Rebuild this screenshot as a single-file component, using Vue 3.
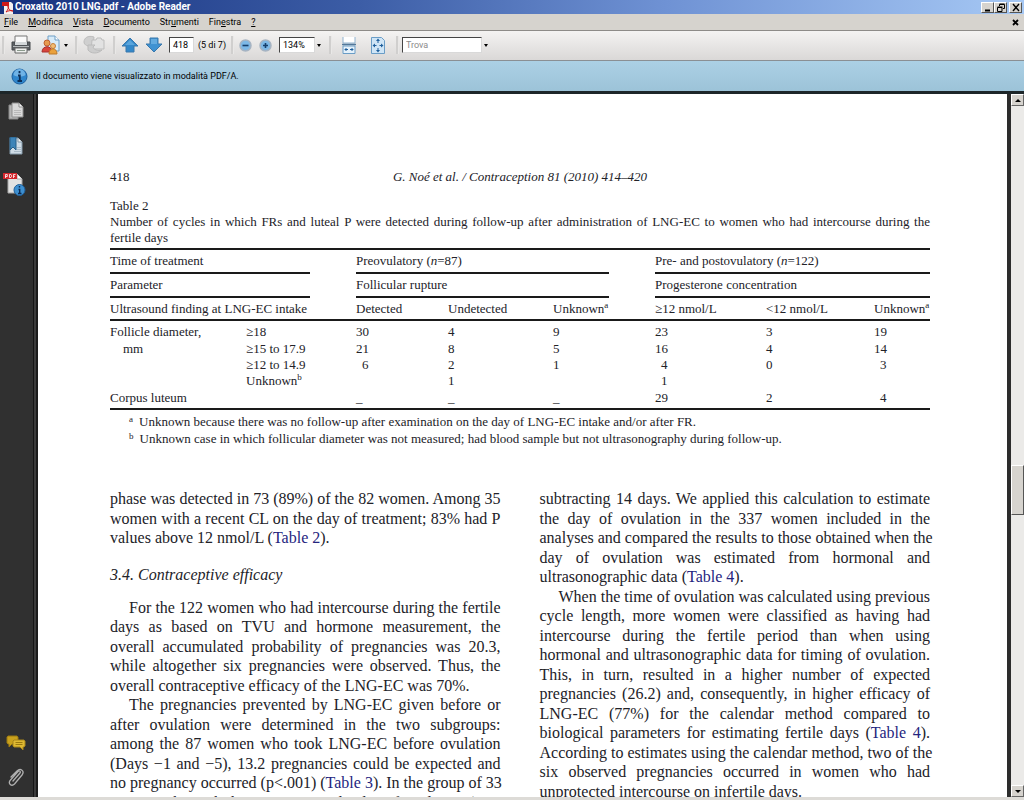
<script setup>
const menus = [
  ['', 'F', 'ile'], ['', 'M', 'odifica'], ['', 'V', 'ista'], ['', 'D', 'ocumento'],
  ['Str', 'u', 'menti'], ['Fin', 'e', 'stra'], ['', '?', ''],
]

const rows = [
  { label: 'Follicle diameter,', sub: '≥18', v: ['30', '4', '9', '23', '3', '19'] },
  { label: 'mm', indent: true, sub: '≥15 to 17.9', v: ['21', '8', '5', '16', '4', '14'] },
  { label: '', sub: '≥12 to 14.9', v: ['6', '2', '1', '4', '0', '3'], pad: [0, 3, 5] },
  { label: '', sub: 'Unknown', mark: 'b', v: ['', '1', '', '1', '', ''], pad: [3] },
  { label: 'Corpus luteum', sub: '', v: ['_', '_', '_', '29', '2', '4'], pad: [5] },
]

const left = [
  { lines: [
    'phase was detected in 73 (89%) of the 82 women. Among 35',
    'women with a recent CL on the day of treatment; 83% had P',
    'values above 12 nmol/L ([Table 2]).',
  ] },
  { heading: '3.4. Contraceptive efficacy' },
  { indent: true, lines: [
    'For the 122 women who had intercourse during the fertile',
    'days as based on TVU and hormone measurement, the',
    'overall accumulated probability of pregnancies was 20.3,',
    'while altogether six pregnancies were observed. Thus, the',
    'overall contraceptive efficacy of the LNG-EC was 70%.',
  ] },
  { indent: true, open: true, lines: [
    'The pregnancies prevented by LNG-EC given before or',
    'after ovulation were determined in the two subgroups:',
    'among the 87 women who took LNG-EC before ovulation',
    '(Days −1 and −5), 13.2 pregnancies could be expected and',
    'no pregnancy occurred (p<.001) ([Table 3]). In the group of 33',
    'women who took the LNG-EC on the day of ovulation (Day',
  ] },
]

const right = [
  { lines: [
    'subtracting 14 days. We applied this calculation to estimate',
    'the day of ovulation in the 337 women included in the',
    'analyses and compared the results to those obtained when the',
    'day of ovulation was estimated from hormonal and',
    'ultrasonographic data ([Table 4]).',
  ] },
  { indent: true, lines: [
    'When the time of ovulation was calculated using previous',
    'cycle length, more women were classified as having had',
    'intercourse during the fertile period than when using',
    'hormonal and ultrasonographic data for timing of ovulation.',
    'This, in turn, resulted in a higher number of expected',
    'pregnancies (26.2) and, consequently, in higher efficacy of',
    'LNG-EC (77%) for the calendar method compared to',
    'biological parameters for estimating fertile days ([Table 4]).',
    'According to estimates using the calendar method, two of the',
    'six observed pregnancies occurred in women who had',
    'unprotected intercourse on infertile days.',
  ] },
]

const columns = [left, right]

function parts(line) {
  return line.split(/[[\]]/).map((text, i) => ({ text, link: i % 2 === 1 }))
}
</script>

<template>
  <div class="window">
    <header class="titlebar">
      <svg class="app-icon" viewBox="0 0 12 13" aria-hidden="true">
        <path d="M2 1h7l2 2v10H2z" fill="#f4f0f0" />
        <path d="M0 1h7v4H0z" fill="#d01818" />
        <path d="M4 11c2-2 3-5 2-6 0 3 2 5 5 5-3-1-5 0-7 1z" fill="none" stroke="#d01818" />
      </svg>
      <h1>Croxatto 2010 LNG.pdf - Adobe Reader</h1>
      <div class="win-buttons">
        <button type="button" aria-label="Riduci a icona"><svg viewBox="0 0 10 9"><path d="M2 7.5h5" stroke="#000" stroke-width="2" /></svg></button>
        <button type="button" aria-label="Ripristina"><svg viewBox="0 0 10 9"><path d="M3.5 3V1.5h5v4H7M3.5 1h5M1.5 4.5h4.5v4h-4.5zM1.5 4h5" fill="none" stroke="#000" /></svg></button>
        <button type="button" class="close" aria-label="Chiudi"><svg viewBox="0 0 10 9"><path d="M2 1l6 7M8 1L2 8" stroke="#000" stroke-width="1.4" /></svg></button>
      </div>
    </header>

    <nav class="menubar">
      <button v-for="(m, i) in menus" :key="i" type="button">{{ m[0] }}<u>{{ m[1] }}</u>{{ m[2] }}</button>
      <button type="button" class="doc-close" aria-label="Chiudi documento"><svg viewBox="0 0 7 7"><path d="M1 1l5 5M6 1L1 6" stroke="#000" stroke-width="1.8" /></svg></button>
    </nav>

    <div class="toolbar">
      <i class="sep"></i>
      <button type="button" class="tool print" aria-label="Stampa">
        <svg width="20" height="20" viewBox="0 0 20 20">
          <path d="M4 1h12v7H4z" fill="#fafafa" stroke="#777" />
          <path d="M1 7h3v3h12V7h3v8H1z" fill="#5c6064" stroke="#44484c" />
          <path d="M4 7h12v3H4z" fill="#d4d8da" />
          <path d="M4 13h12v5H4z" fill="#eef0ee" stroke="#666" />
          <path d="M6 15.5h8" stroke="#8b9a8c" />
          <path d="M2 11.5h16" stroke="#b4b8ba" />
        </svg>
      </button>
      <button type="button" class="tool collab" aria-label="Collabora">
        <svg width="20" height="20" viewBox="0 0 20 20">
          <path d="M7 1h7l4 4v11H7z" fill="#d8ebf8" stroke="#6f9fc6" />
          <path d="M14 1v4h4" fill="#fff" stroke="#6f9fc6" />
          <circle cx="6" cy="8" r="3" fill="#e69b50" stroke="#c06030" />
          <path d="M1 17c0-7 10-7 10 0z" fill="#d8453a" stroke="#a83030" />
          <circle cx="12" cy="11" r="2.5" fill="#f3bd76" stroke="#c67d36" />
          <path d="M8 19c0-7 8-7 8 0z" fill="#eaa13c" stroke="#bd7a2a" />
        </svg>
        <i class="caret"></i>
      </button>
      <i class="sep"></i>
      <button type="button" class="tool review" aria-label="Rivedi" disabled>
        <svg width="22" height="20" viewBox="0 0 22 20">
          <path d="M11 2C5 0 1 3 1 7c0 3 4 5 9 4z" fill="#cfcfcf" stroke="#bdbdbd" />
          <path d="M9 5h4l1-2h4l1 2h2v9h-9l-4 3z" fill="#e2e2e2" stroke="#bdbdbd" />
          <path d="M5 10v5c3 4 10 4 14 0-4 1-8 0-9-3l2-2z" fill="#cdcdcd" stroke="#bbb" />
        </svg>
      </button>
      <i class="sep"></i>
      <button type="button" class="tool up" aria-label="Pagina precedente">
        <svg width="18" height="16" viewBox="0 0 18 16"><path d="M9 1l8 8h-4v6H5V9H1z" fill="#3488c9" stroke="#3a78ac" /><path d="M9 3l5 5H4z" fill="#5ba5dc" /></svg>
      </button>
      <button type="button" class="tool down" aria-label="Pagina successiva">
        <svg width="18" height="16" viewBox="0 0 18 16"><path d="M9 15l8-8h-4V1H5v6H1z" fill="#3f92d2" stroke="#3a78ac" /><path d="M6 2h6v5H6z" fill="#63abe0" /></svg>
      </button>
      <input class="page-no" type="text" value="418" aria-label="Numero di pagina" />
      <span class="page-of">(5 di 7)</span>
      <i class="sep"></i>
      <button type="button" class="tool minus" aria-label="Zoom indietro">
        <svg width="13" height="13" viewBox="0 0 13 13"><circle cx="6.5" cy="6.5" r="5.5" fill="#7db8e6" stroke="#a7b4c2" stroke-width="1.5" /><path d="M3.5 6.5h6" stroke="#163f6c" stroke-width="1.6" /></svg>
      </button>
      <button type="button" class="tool plus" aria-label="Zoom avanti">
        <svg width="13" height="13" viewBox="0 0 13 13"><circle cx="6.5" cy="6.5" r="5.5" fill="#7db8e6" stroke="#a7b4c2" stroke-width="1.5" /><path d="M4 6.5h5M6.5 4v5" stroke="#163f6c" stroke-width="1.6" /></svg>
      </button>
      <input class="zoom" type="text" value="134%" aria-label="Ingrandimento" />
      <button type="button" class="drop" aria-label="Scegli ingrandimento"><i class="caret"></i></button>
      <i class="sep"></i>
      <button type="button" class="tool fit-width" aria-label="Adatta larghezza">
        <svg width="14" height="17" viewBox="0 0 14 17">
          <path d="M1 0v6h12V0" fill="#fff" stroke="#8fb2cf" />
          <path d="M0 7.5h14" stroke="#52789a" stroke-width="1.5" />
          <path d="M1 9h12v7.5H1z" fill="#e4f1fb" stroke="#6a9dc6" />
          <path d="M3 12.5h3M8 12.5h3M4.5 11L3 12.5 4.5 14M9.5 11l1.5 1.5L9.5 14" fill="none" stroke="#1f5f9c" />
        </svg>
      </button>
      <button type="button" class="tool fit-page" aria-label="Adatta pagina">
        <svg width="14" height="17" viewBox="0 0 14 17">
          <path d="M.5.5h10l3 3v13H.5z" fill="#cfe5f6" stroke="#6a9dc6" />
          <path d="M7 1.5L5 4h4zM7 15.5L5 13h4zM1.5 8.5l2.5-2v4zM12.5 8.5l-2.5-2v4z" fill="#1f5f9c" />
          <path d="M7 4v2M7 11v2M4 8.5h1.5M8.5 8.5H10" stroke="#1f5f9c" />
        </svg>
      </button>
      <i class="sep"></i>
      <input class="find" type="text" placeholder="Trova" aria-label="Trova" />
      <button type="button" class="drop" aria-label="Opzioni di ricerca"><i class="caret"></i></button>
    </div>

    <div class="notice">
      <svg width="17" height="17" viewBox="0 0 17 17" aria-hidden="true">
        <circle cx="8.5" cy="8.5" r="7.5" fill="#2f86cc" stroke="#1d5f9e" />
        <path d="M2.5 7a6 6 0 0 1 12 0c-3 2-9 2-12 0z" fill="#6fb3e6" />
        <path d="M8.5 3v2.2M7 7.5h1.8v5M6.5 13h4.5" stroke="#0c2f58" stroke-width="1.8" fill="none" />
      </svg>
      <span>Il documento viene visualizzato in modalità PDF/A.</span>
    </div>

    <div class="workspace">
      <aside class="sidebar">
        <button type="button" aria-label="Pagine">
          <svg width="16" height="18" viewBox="0 0 16 18">
            <path d="M1 3h9v14H1z" fill="#b5b5b5" stroke="#8a8a8a" />
            <path d="M4 1h7l4 4v10H4z" fill="#d9d9d9" stroke="#8f8f8f" />
            <path d="M11 1v4h4" fill="#f4f4f4" stroke="#8f8f8f" />
            <path d="M6 8.5h7M6 10.5h7M6 12.5h7" stroke="#b9b9b9" />
          </svg>
        </button>
        <button type="button" aria-label="Segnalibri">
          <svg width="16" height="18" viewBox="0 0 16 18">
            <path d="M2 1h8l4 4v12H2z" fill="#cfdce6" stroke="#8298a8" />
            <path d="M10 1v4h4" fill="#f4f4f4" stroke="#8298a8" />
            <path d="M2 0h6v13l-3-3-3 3z" fill="#3d84b8" stroke="#285f88" />
            <path d="M9 10.5h4M9 12.5h4M6 14.5h7" stroke="#a9bac7" />
          </svg>
        </button>
        <button type="button" class="pdf" aria-label="Standard">
          <svg width="24" height="25" viewBox="0 0 24 25">
            <path d="M6 2h9l5 5v14H6z" fill="#e2e2e2" stroke="#a8a8a8" />
            <path d="M15 2v5h5" fill="#fff" stroke="#a8a8a8" />
            <path d="M1 1h14v6H1z" fill="#d3262c" />
            <path d="M3.5 6V2.5h1.8v2H3.5M7.5 2.5v3h1.5l.5-.7v-1.6L9 2.5zM11.5 6V2.5h2M11.5 4.3h1.5" fill="none" stroke="#fff" stroke-width=".8" />
            <circle cx="17.5" cy="18" r="5.5" fill="#3d8fd0" stroke="#1f5e98" />
            <path d="M17.5 14v1.5M16.5 17.5h1.2v3.5M16 21.5h3.5" stroke="#0b2b52" stroke-width="1.4" fill="none" />
          </svg>
        </button>
        <span class="fill"></span>
        <button type="button" class="comments" aria-label="Commenti">
          <svg width="20" height="16" viewBox="0 0 20 16">
            <path d="M2 1h9l1 1v6l-1 1H6l-3 3V9H2L1 8V2z" fill="#c9a11d" stroke="#9a7910" />
            <path d="M8 5h10l1 1v5l-1 1h-1v3l-3-3H8l-1-1V6z" fill="#dfb932" stroke="#a7851a" />
            <path d="M9.5 7.5h7M9.5 9.5h7" stroke="#9a7910" />
          </svg>
        </button>
        <button type="button" aria-label="Allegati">
          <svg width="18" height="19" viewBox="0 0 18 19">
            <path d="M6 13l7-8c1-1.5-.5-3-2-1.5L3.5 12c-3 3.5 1 7 4 4l7.5-9c3-4-1.5-7.5-5-4L4 9" fill="none" stroke="#b0b0b0" stroke-width="1.3" stroke-linecap="round" />
          </svg>
        </button>
      </aside>

      <main class="page">
        <header class="running">
          <span>418</span>
          <em>G. Noé et al. / Contraception 81 (2010) 414–420</em>
        </header>

        <section class="table-block">
          <p id="table-title" class="caption">
            <span class="line last">Table 2</span>
            <span class="line">Number of cycles in which FRs and luteal P were detected during follow-up after administration of LNG-EC to women who had intercourse during the</span>
            <span class="line last">fertile days</span>
          </p>
          <table aria-labelledby="table-title">
            <colgroup>
              <col class="c-label" /><col class="c-sub" /><col class="c-gap" />
              <col class="c-a" /><col class="c-b" /><col class="c-c" /><col class="c-gap" />
              <col class="c-d" /><col class="c-e" /><col class="c-c" />
            </colgroup>
            <thead>
              <tr>
                <th class="rule" colspan="2">Time of treatment</th><td></td>
                <th class="rule" colspan="3">Preovulatory (<i>n</i>=87)</th><td></td>
                <th class="rule" colspan="3">Pre- and postovulatory (<i>n</i>=122)</th>
              </tr>
              <tr>
                <th class="rule" colspan="2">Parameter</th><td></td>
                <th class="rule" colspan="3">Follicular rupture</th><td></td>
                <th class="rule" colspan="3">Progesterone concentration</th>
              </tr>
              <tr class="full">
                <th colspan="2">Ultrasound finding at LNG-EC intake</th><td></td>
                <th>Detected</th><th>Undetected</th><th>Unknown<sup>a</sup></th><td></td>
                <th>≥12 nmol/L</th><th>&lt;12 nmol/L</th><th>Unknown<sup>a</sup></th>
              </tr>
            </thead>
            <tbody>
              <tr v-for="(r, i) in rows" :key="i">
                <th :class="{ indent: r.indent }">{{ r.label }}</th>
                <td>{{ r.sub }}<sup v-if="r.mark">{{ r.mark }}</sup></td>
                <td></td>
                <template v-for="(v, k) in r.v" :key="k">
                  <td v-if="k === 3"></td>
                  <td :class="{ units: r.pad && r.pad.includes(k) }">{{ v }}</td>
                </template>
              </tr>
            </tbody>
          </table>
          <ul class="notes">
            <li><sup>a</sup> Unknown because there was no follow-up after examination on the day of LNG-EC intake and/or after FR.</li>
            <li><sup>b</sup> Unknown case in which follicular diameter was not measured; had blood sample but not ultrasonography during follow-up.</li>
          </ul>
        </section>

        <div class="columns">
          <article v-for="(col, c) in columns" :key="c">
            <template v-for="(block, b) in col" :key="b">
              <h2 v-if="block.heading">{{ block.heading }}</h2>
              <p v-else :class="{ first: block.indent, open: block.open }">
                <span v-for="(line, l) in block.lines" :key="l" class="line"><template v-for="(s, n) in parts(line)" :key="n"><a v-if="s.link" href="#table-title">{{ s.text }}</a><template v-else>{{ s.text }}</template></template></span>
              </p>
            </template>
          </article>
        </div>
      </main>

      <div class="scrollbar">
        <button type="button" aria-label="Scorri su"><i class="arrow-up"></i></button>
        <span class="track-top"></span>
        <span class="thumb"></span>
        <span class="track-bottom"></span>
        <button type="button" aria-label="Scorri giù"><i class="arrow-down"></i></button>
      </div>
    </div>
    <footer class="bottom-edge"></footer>
  </div>
</template>

<style>
html, body { margin: 0; overflow: hidden; }
</style>

<style scoped>
* { box-sizing: border-box; }
.window {
  display: flex; flex-direction: column; height: 100vh; overflow: hidden;
  font: 9px/12px Roboto, "Liberation Sans", sans-serif; color: #000; background: #2c2c2c;
}
button { border: 0; padding: 0; margin: 0; background: none; font: inherit; color: inherit; display: flex; align-items: center; }
svg { display: block; flex: none; }

.titlebar { flex: none; display: flex; align-items: center; height: 14px; padding: 0 2px; background: linear-gradient(90deg, #16317e 0%, #3c5da6 35%, #6f92d4 65%, #a6c8f4 100%); color: #fff; }
.app-icon { width: 12px; height: 13px; }
.titlebar h1 { flex: 1; margin: 0 0 0 1px; font: bold 10px/14px Roboto, "Liberation Sans", sans-serif; }
.win-buttons { display: flex; }
.win-buttons button { width: 13px; height: 11px; justify-content: center; background: #d6d3ce; border: 1px solid; border-color: #fff #555 #555 #fff; }
.win-buttons svg { width: 10px; height: 9px; }
.win-buttons .close { margin-left: 2px; }

.menubar { flex: none; display: flex; align-items: center; gap: 10px; height: 17px; padding: 0 5px 0 4px; background: #d6d3ce; border-bottom: 1px solid #8d8b88; }
.menubar svg { width: 7px; height: 7px; }
.doc-close { margin-left: auto; }

.toolbar { flex: none; display: flex; align-items: center; height: 30px; padding: 0 0 1px 2px; background: linear-gradient(#f4f3f2, #dad8d7); border-bottom: 1px solid #8a8f94; }
.sep { flex: none; width: 3px; height: 18px; background: #d0cfce; border-right: 1px solid #e9e8e7; }
.caret { width: 0; height: 0; border: 2px solid transparent; border-top: 3px solid #000; border-bottom: 0; }
.arrow-up { width: 0; height: 0; border: 3px solid transparent; border-bottom: 3px solid #000; border-top: 0; }
.arrow-down { width: 0; height: 0; border: 3px solid transparent; border-top: 3px solid #000; border-bottom: 0; }
.tool { flex: none; }
.print { margin: 0 10px 0 6px; }
.collab { gap: 3px; margin-right: 7px; }
.review { margin: 0 8px 0 5px; }
.up { margin: 0 6px 0 5px; }
.down { margin-right: 6px; }
.toolbar input { height: 16px; padding: 0 3px; background: #fff; border: 1px solid; border-color: #444 #d9d9d9 #d9d9d9 #444; border-radius: 0; font: inherit; color: #000; }
.toolbar .page-no { width: 25px; margin-right: 4px; }
.page-of { width: 33px; }
.page-of, .menubar button, .notice span { white-space: nowrap; }
.minus { margin: 0 7px 0 5px; }
.plus { margin-right: 7px; }
.toolbar .zoom { width: 36px; }
.drop { width: 7px; height: 16px; justify-content: center; }
.drop + .sep { margin-left: 7px; }
.fit-width { margin: 0 15px 0 10px; }
.fit-page { margin-right: 11px; }
.toolbar .find { width: 80px; margin-left: 3px; }
.find::placeholder { color: #8b8b8b; opacity: 1; }

.notice { flex: none; display: flex; align-items: center; gap: 8px; height: 30px; padding-left: 11px; background: linear-gradient(#abd0e5, #9cc3d8); }

.workspace { flex: 1; min-height: 0; display: flex; border-top: 3px solid #1d2629; }
.sidebar { flex: none; width: 38px; display: flex; flex-direction: column; align-items: center; gap: 17px; padding: 8px 6px 10px 0; background: linear-gradient(90deg, #303030 33px, #161616 33px, #161616 34px, #3c3c3c 34px, #3c3c3c 36px, #1c1c1c 36px); }
.pdf { margin-right: 4px; }
.fill { flex: 1; }

.page { flex: 1; min-width: 0; padding: 75px 77px 0 72px; background: #fff; overflow: hidden; font-family: "Liberation Serif", serif; color: #222228; font-size: 13px; line-height: 16px; }
.running { display: grid; grid-template-columns: 1fr auto 1fr; }
.line { display: block; white-space: nowrap; text-align-last: justify; }
.line.last { text-align-last: left; }
.caption { margin: 13px 0 2px; }
table { width: 100%; table-layout: fixed; border-collapse: separate; border-spacing: 0; border-top: 2px solid #1a1a1a; border-bottom: 2px solid #1a1a1a; }
.c-label { width: 136px; } .c-sub { width: 64px; } .c-gap { width: 46px; }
.c-a { width: 92px; } .c-b { width: 105px; } .c-c { width: 56px; }
.c-d { width: 111px; } .c-e { width: 108px; }
th, td { padding: 0; text-align: left; font-weight: normal; white-space: nowrap; height: 16px; vertical-align: bottom; }
thead th, thead td { height: 24px; vertical-align: middle; }
thead .full > * { height: 23px; }
.rule, .full > * { border-bottom: 2px solid #1a1a1a; }
tbody tr:first-child > * { height: 19px; }
tbody tr:nth-child(2) > * { height: 17px; }
tbody tr:last-child > * { height: 19px; padding-bottom: 2px; }
.indent { padding-left: 13px; }
.units { padding-left: 6px; }
sup { font-size: 9px; line-height: 0; }
.notes { list-style: none; margin: 3px 0 0; padding: 0 0 0 19px; }
.notes li { display: flex; gap: 6px; line-height: 17px; white-space: nowrap; }
.notes sup { line-height: 12px; }

.columns { display: grid; grid-template-columns: minmax(0, 1fr) minmax(0, 1fr); column-gap: 39px; margin-top: 42px; font-size: 16px; line-height: 1.22; }
.columns p { margin: 0; }
.columns p .line:last-child { text-align-last: left; }
.columns .open .line:last-child { text-align-last: justify; }
.first .line:first-child { padding-left: 19px; }
h2 { margin: 17px 0 13px; font: italic 16px/20px "Liberation Serif", serif; }
a { color: #24247e; text-decoration: none; }

.scrollbar { flex: none; width: 17px; display: flex; flex-direction: column; background: #ebeae8; border-left: 4px solid #2c2c2c; }
.scrollbar button { height: 12px; justify-content: center; background: #d6d3ce; border: 1px solid; border-color: #fff #666 #666 #fff; }
.track-top { flex: 360; }
.thumb { flex: 48; background: #d6d3ce; border: 1px solid; border-color: #fff #555 #555 #fff; }
.track-bottom { flex: 271; }
.bottom-edge { flex: none; height: 3px; background: #dddbd7; }
</style>
